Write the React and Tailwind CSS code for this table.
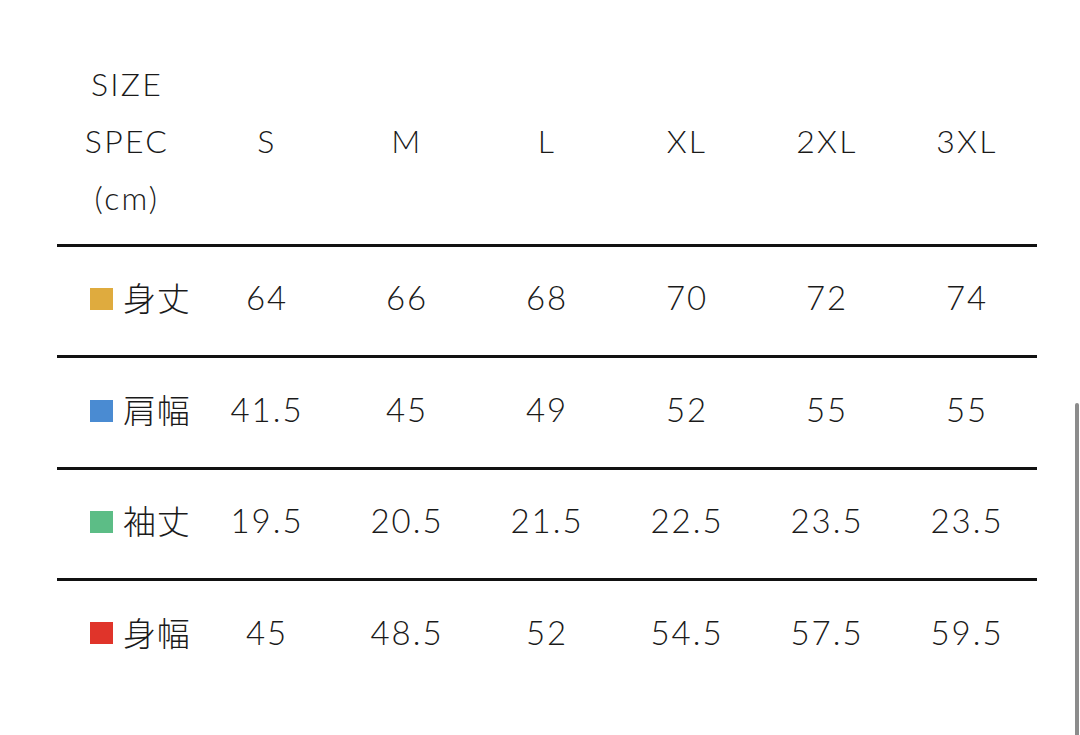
import React from "react";

const sizes = ["S", "M", "L", "XL", "2XL", "3XL"];

const rows = [
  { label: "身丈", color: "bg-[#dfab3e]", values: ["64", "66", "68", "70", "72", "74"] },
  { label: "肩幅", color: "bg-[#4a8bd2]", values: ["41.5", "45", "49", "52", "55", "55"] },
  { label: "袖丈", color: "bg-[#5cbd86]", values: ["19.5", "20.5", "21.5", "22.5", "23.5", "23.5"] },
  { label: "身幅", color: "bg-[#e0342a]", values: ["45", "48.5", "52", "54.5", "57.5", "59.5"] },
];

export default function App() {
  return (
    <div
      className="relative w-[1080px] h-[735px] overflow-hidden bg-white text-[#1a1a1a]"
      style={{ fontFamily: '"Lato", "Noto Sans CJK JP", sans-serif' }}
    >
      <div className="ml-[57px] w-[980px] pt-[55px]">
        {/* header */}
        <div className="grid grid-cols-7 items-center pb-[18px] text-[32px] font-light tracking-[0.07em]">
          <div className="flex flex-col items-center leading-[57px]">
            <span>SIZE</span>
            <span>SPEC</span>
            <span>(cm)</span>
          </div>
          {sizes.map((s) => (
            <div key={s} className="text-center">{s}</div>
          ))}
        </div>

        {rows.map((r) => (
          <div key={r.label} className="border-t-[3px] border-[#111]">
            <div className="grid grid-cols-7 items-center h-[108.4px] pb-[6px] text-[33px] font-light tracking-[0.06em]">
              <div className="flex items-center pl-[33px] pt-[2px]">
                <span className={`w-[23px] h-[22px] ${r.color}`}></span>
                <span className="ml-[10px] text-[33px] tracking-[0.02em]">{r.label}</span>
              </div>
              {r.values.map((v, i) => (
                <div key={i} className="text-center">{v}</div>
              ))}
            </div>
          </div>
        ))}
      </div>

      {/* scrollbar */}
      <div className="absolute right-[1px] top-[403px] w-[4px] h-[340px] rounded-full bg-[#8c8c8c]"></div>
    </div>
  );
}
